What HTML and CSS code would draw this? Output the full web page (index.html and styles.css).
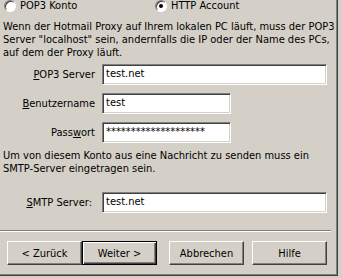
FILE: index.html
```html
<!DOCTYPE html>
<html lang="de">
<head>
    <meta charset="UTF-8">
    <title>Hotmail Konto</title>
    <link rel="stylesheet" href="styles.css">
</head>
<body>
    <div class="dialog">
        <div class="radios">
            <label class="option first"><span class="radio"></span>POP3 Konto</label>
            <label class="option"><span class="radio checked"></span>HTTP Account</label>
        </div>

        <p class="intro">Wenn der Hotmail Proxy auf Ihrem lokalen PC läuft, muss der POP3<br>Server "localhost" sein, andernfalls die IP oder der Name des PCs,<br>auf dem der Proxy läuft.</p>

        <div class="row first-row">
            <span class="label"><u>P</u>OP3 Server</span>
            <div class="field wide">test.net</div>
        </div>
        <div class="row">
            <span class="label"><u>B</u>enutzername</span>
            <div class="field">test</div>
        </div>
        <div class="row">
            <span class="label">Pass<u>w</u>ort</span>
            <div class="field">********************</div>
        </div>

        <p class="note">Um von diesem Konto aus eine Nachricht zu senden muss ein<br>SMTP-Server eingetragen sein.</p>

        <div class="row smtp-row">
            <span class="label smtp"><u>S</u>MTP Server:</span>
            <div class="field wide">test.net</div>
        </div>

        <div class="separator"></div>

        <!-- Wizard-Buttons -->
        <div class="buttons">
            <button>&lt; Zurück</button>
            <button class="default">Weiter &gt;</button>
            <button class="cancel">Abbrechen</button>
            <button class="help">Hilfe</button>
        </div>
    </div>
</body>
</html>
```

FILE: styles.css
```css
html, body {
    margin: 0;
    width: 342px;
    height: 278px;
    overflow: hidden;
    background: #d4d0c8;
}

body {
    font-family: 'DejaVu Sans Condensed', 'Liberation Sans', sans-serif;
    font-size: 11px;
    line-height: 13px;
    color: #000;
}

.dialog {
    box-sizing: border-box;
    width: 338px;
    height: 276px;
    padding-left: 3px;
    box-shadow: inset -1px -1px 0 #404040, inset -2px -2px 0 #808080;
    overflow: hidden;
}

/* Auswahl oben */
.radios {
    display: flex;
    height: 11px;
    line-height: 11px;
}

.option {
    display: flex;
    align-items: center;
    gap: 4px;
    white-space: nowrap;
}

.option.first {
    width: 151px;
    margin-left: 1px;
}

.radio {
    position: relative;
    box-sizing: border-box;
    width: 12px;
    height: 12px;
    border-radius: 50%;
    background: #fff;
    border: 1px solid;
    border-color: #808080 #ffffff #ffffff #808080;
    box-shadow: inset 1px 1px 0 #404040;
}

.radio.checked::after {
    content: '';
    position: absolute;
    left: 3px;
    top: 3px;
    width: 4px;
    height: 4px;
    border-radius: 50%;
    background: #000;
}

.intro {
    margin: 9px 0 0;
    white-space: nowrap;
}

.row {
    display: grid;
    grid-template-columns: 99px auto;
    align-items: center;
    margin-top: 8px;
}

.row.first-row {
    margin-top: 5px;
}

.label {
    text-align: right;
    padding-right: 7px;
    white-space: nowrap;
}

.label.smtp {
    padding-right: 10px;
}

.field {
    box-sizing: border-box;
    width: 129px;
    height: 21px;
    padding: 0 3px;
    line-height: 17px;
    background: #fff;
    border: 1px solid;
    border-color: #808080 #ffffff #ffffff #808080;
    box-shadow: inset 1px 1px 0 #404040, inset -1px -1px 0 #d4d0c8;
    white-space: nowrap;
    overflow: hidden;
}

.field.wide {
    width: 225px;
}

.note {
    margin: 6px 0 0;
    white-space: nowrap;
}

.row.smtp-row {
    margin-top: 17px;
}

.separator {
    width: 331px;
    margin: 17px 0 0 -3px;
    border-top: 1px solid #808080;
    border-bottom: 1px solid #ffffff;
}

.buttons {
    display: flex;
    margin: 9px 0 0 4px;
}

button {
    box-sizing: border-box;
    width: 75px;
    height: 24px;
    padding: 0;
    font-family: inherit;
    font-size: 11px;
    color: #000;
    background: #d4d0c8;
    border: 1px solid;
    border-color: #ffffff #404040 #404040 #ffffff;
    box-shadow: inset -1px -1px 0 #808080;
}

button.default {
    border: 1px solid #000;
    box-shadow: inset 1px 1px 0 #ffffff, inset -1px -1px 0 #404040, inset -2px -2px 0 #808080;
}

button.cancel {
    margin-left: 12px;
}

button.help {
    margin-left: 8px;
}
```
